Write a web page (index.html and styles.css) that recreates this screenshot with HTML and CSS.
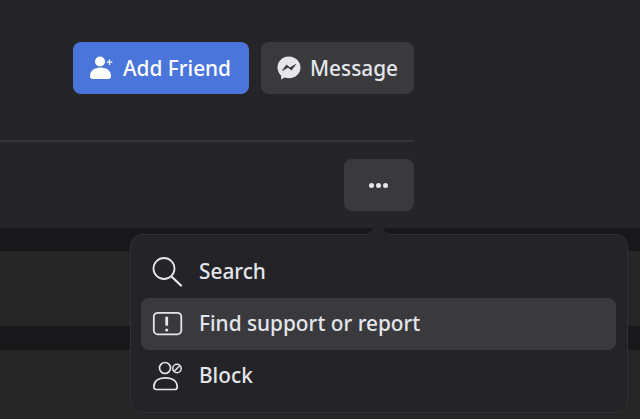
FILE: index.html
```html
<!DOCTYPE html>
<html lang="en">

<head>
    <meta charset="UTF-8">
    <meta name="viewport" content="width=device-width, initial-scale=1.0">
    <title>Profile actions</title>
    <link rel="stylesheet" href="styles.css">
</head>

<body>
    <header class="profile">
        <div class="actions">
            <button class="btn btn-primary">
                <svg class="btn-icon" width="26" height="26" viewBox="0 0 26 26">
                    <circle cx="11" cy="6.500" r="5" fill="#fff" />
                    <path d="M1 21c0-5 4-8.500 10.500-8.500S22 16 22 21c0 2-1 3-2.500 3h-16C2 24 1 23 1 21z" fill="#fff" />
                    <path d="M20.500 4.500v5.500M17.800 7.200h5.500" stroke="#fff" stroke-width="1.300" />
                </svg>
                <span>Add Friend</span>
            </button>
            <button class="btn">
                <svg class="btn-icon" width="24" height="24" viewBox="0 0 24 24">
                    <path d="M12 .5C5.500.5.500 5.200.500 11.500c0 3.300 1.400 6.100 3.600 8.100v3.900l3.600-2c1.300.5 2.800.7 4.300.7 6.500 0 11.500-4.700 11.500-10.700S18.500.5 12 .5z" fill="#e4e6eb" />
                    <path d="M5.500 14.500l4-5.500 3.500 2.800L18.500 8.500l-4 5.500-3.500-2.800z" fill="#3a3a3d" stroke="#3a3a3d" stroke-width=".8" stroke-linejoin="round" />
                </svg>
                <span>Message</span>
            </button>
        </div>
        <hr class="divider">
        <div class="actions">
            <button class="btn btn-more" aria-label="More">
                <span class="dot"></span><span class="dot"></span><span class="dot"></span>
            </button>
        </div>
    </header>

    <main class="feed">
        <section class="card"></section>
        <section class="card card-last"></section>
    </main>

    <div class="menu">
        <span class="menu-arrow"></span>
        <div class="menu-item">
            <svg width="32" height="32" viewBox="0 0 32 32" fill="none" stroke="#e4e6eb" stroke-width="1.800">
                <circle cx="13" cy="12.500" r="10.500" />
                <path d="M21 21l9 8.500" stroke-linecap="round" stroke-width="2.300" />
            </svg>
            <span>Search</span>
        </div>
        <div class="menu-item menu-item-active">
            <svg width="32" height="32" viewBox="0 0 32 32" fill="none" stroke="#e4e6eb" stroke-width="1.800">
                <rect x="2.800" y="4.800" width="27.500" height="21.500" rx="4" />
                <path d="M15.700 8.700v9" stroke-width="2.800" />
                <circle cx="15.700" cy="22" r="1.600" fill="#e4e6eb" stroke="none" />
            </svg>
            <span>Find support or report</span>
        </div>
        <div class="menu-item">
            <svg width="32" height="32" viewBox="0 0 32 32" fill="none" stroke="#e4e6eb" stroke-width="1.700">
                <circle cx="14" cy="8" r="5.500" />
                <circle cx="26" cy="8.500" r="4.200" stroke-width="1.500" />
                <path d="M23.300 11.200l5.400-5.400" stroke-width="1.500" />
                <path d="M2.800 27c0-6 4.500-9.200 11.700-9.200s11.700 3.200 11.700 9.200c0 1.800-1 2.500-2.500 2.500H5.300c-1.500 0-2.500-.7-2.500-2.500z" />
            </svg>
            <span>Block</span>
        </div>
    </div>
</body>

</html>
```

FILE: styles.css
```css
body {
    margin: 0;
    height: 419px;
    overflow: hidden;
    display: flex;
    flex-direction: column;
    background-color: #18181a;
    font-family: "Noto Sans", Arial, sans-serif;
}

.profile {
    height: 228px;
    padding-top: 42px;
    box-sizing: border-box;
    background-color: #252528;
}

.actions {
    width: 414px;
    display: flex;
    justify-content: flex-end;
    gap: 12px;
}

.btn {
    height: 52px;
    padding: 0 16px;
    display: flex;
    align-items: center;
    gap: 9px;
    background-color: #3a3a3d;
    border: none;
    border-radius: 8px;
    color: #e4e6eb;
    font-family: inherit;
    font-size: 20.8px;
    font-weight: 500;
}

.btn-primary {
    padding-right: 18px;
    gap: 8px;
    background-color: #4a76db;
    color: #fff;
}

.btn-more {
    width: 70px;
    justify-content: center;
    gap: 2px;
    padding: 0 1px 0 0;
}

.dot {
    width: 5px;
    height: 5px;
    border-radius: 50%;
    background-color: #e4e6eb;
}

.divider {
    width: 414px;
    height: 2px;
    margin: 46px 0 17px;
    border: none;
    background-color: #363639;
}

.feed {
    flex: 1;
    padding-top: 23px;
    display: flex;
    flex-direction: column;
    gap: 24px;
}

.card {
    height: 75px;
    background-color: #262627;
}

.card-last {
    height: auto;
    flex: 1;
}

.menu {
    position: absolute;
    left: 130px;
    top: 234px;
    width: 498px;
    height: 179px;
    padding: 11px 11px 10px 10px;
    box-sizing: border-box;
    background-color: #242428;
    border: 1px solid #303034;
    border-radius: 12px;
}

.menu-arrow {
    position: absolute;
    left: 236px;
    top: -12px;
    border-left: 11px solid transparent;
    border-right: 11px solid transparent;
    border-bottom: 12px solid #242428;
}

.menu-item {
    height: 52px;
    padding-left: 10px;
    display: flex;
    align-items: center;
    gap: 16px;
    border-radius: 8px;
    color: #e4e6eb;
    font-size: 20.8px;
    font-weight: 500;
}

.menu-item span {
    position: relative;
    top: -1px;
}

.menu-item-active {
    background-color: #3a3a3e;
}
```
